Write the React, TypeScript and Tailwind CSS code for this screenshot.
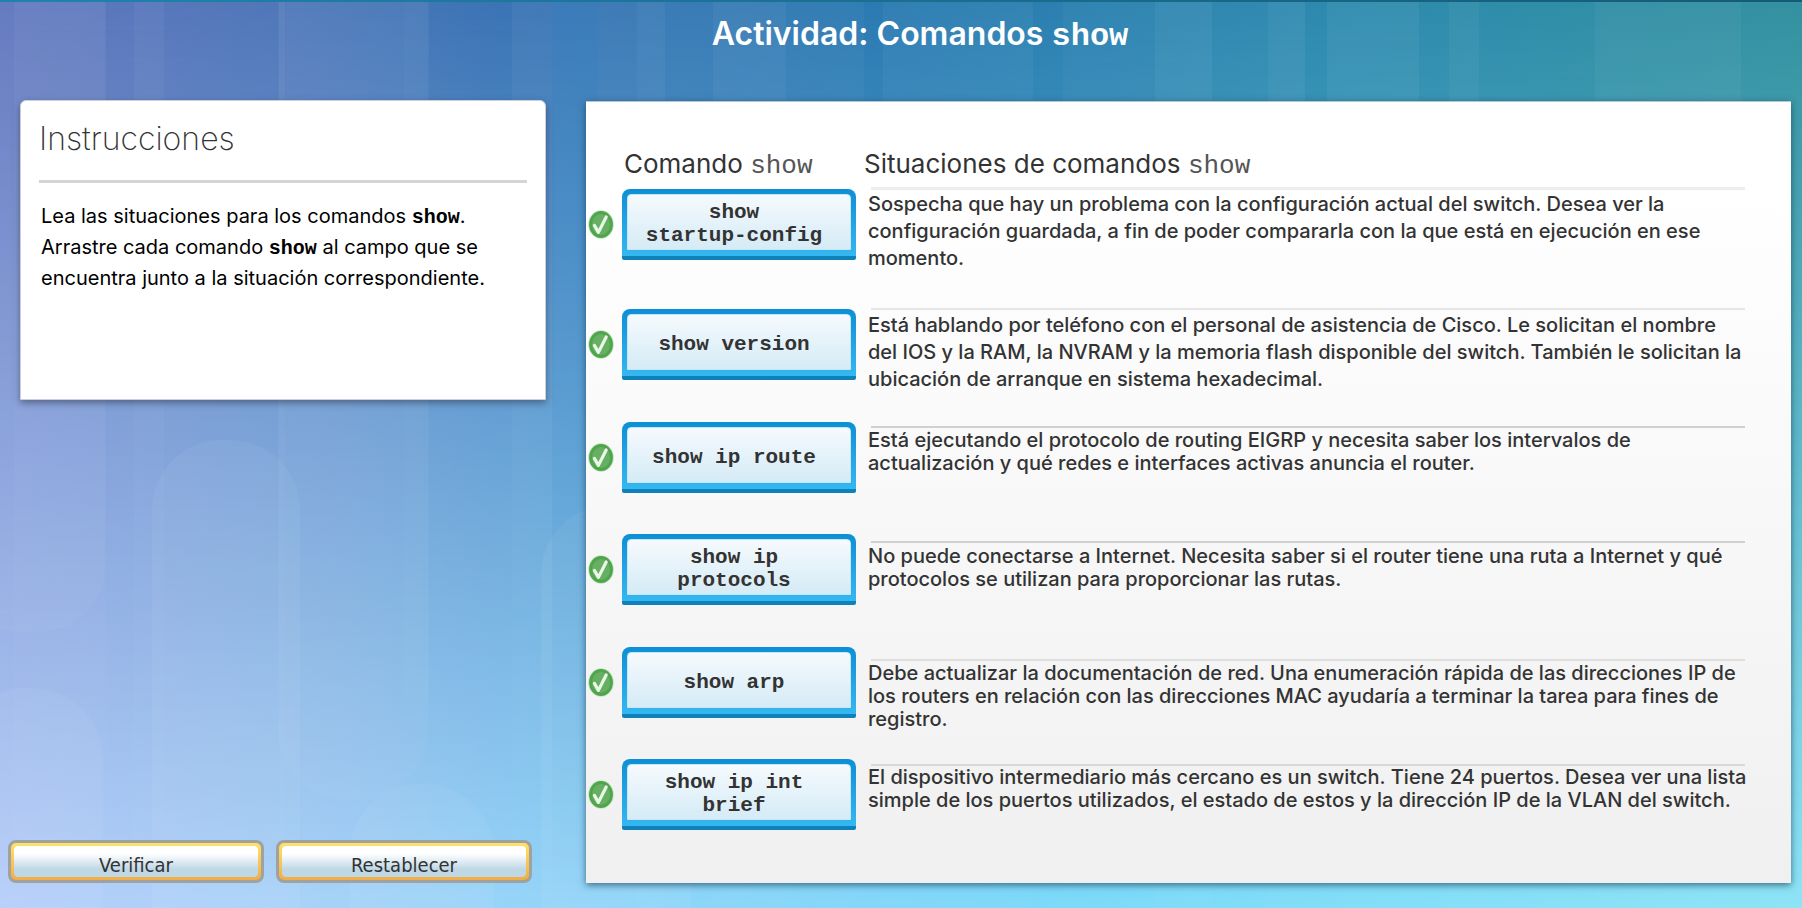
import type { ReactNode } from "react";

type Row = { command: string; situation: string; row: string; offset: string; line: string; rule: string };

const rows: Row[] = [
  {
    command: "show\nstartup-config",
    situation:
      "Sospecha que hay un problema con la configuración actual del switch. Desea ver la\nconfiguración guardada, a fin de poder compararla con la que está en ejecución en ese\nmomento.",
    row: "min-h-[120px]",
    offset: "pt-px",
    line: "pt-px leading-[27px]",
    rule: "border-[#ededed] border-t-[3px]",
  },
  {
    command: "show version",
    situation:
      "Está hablando por teléfono con el personal de asistencia de Cisco. Le solicitan el nombre\ndel IOS y la RAM, la NVRAM y la memoria flash disponible del switch. También le solicitan la\nubicación de arranque en sistema hexadecimal.",
    row: "min-h-[113px]",
    offset: "pt-0.5",
    line: "pt-0.5 leading-[27px]",
    rule: "border-[#e6e6e6] border-t-2",
  },
  {
    command: "show ip route",
    situation:
      "Está ejecutando el protocolo de routing EIGRP y necesita saber los intervalos de\nactualización y qué redes e interfaces activas anuncia el router.",
    row: "min-h-[112px]",
    offset: "pt-[7px]",
    line: "pt-px leading-[23px]",
    rule: "border-[#d0d0d0] border-t-2",
  },
  {
    command: "show ip\nprotocols",
    situation:
      "No puede conectarse a Internet. Necesita saber si el router tiene una ruta a Internet y qué\nprotocolos se utilizan para proporcionar las rutas.",
    row: "min-h-[113px]",
    offset: "pt-2.5",
    line: "pt-0.5 leading-[23px]",
    rule: "border-[#d0d0d0] border-t-2",
  },
  {
    command: "show arp",
    situation:
      "Debe actualizar la documentación de red. Una enumeración rápida de las direcciones IP de\nlos routers en relación con las direcciones MAC ayudaría a terminar la tarea para fines de\nregistro.",
    row: "min-h-[112px]",
    offset: "pt-[15px]",
    line: "pt-px leading-[23px]",
    rule: "border-[#dedede] border-t-2",
  },
  {
    command: "show ip int\nbrief",
    situation:
      "El dispositivo intermediario más cercano es un switch. Tiene 24 puertos. Desea ver una lista\nsimple de los puertos utilizados, el estado de estos y la dirección IP de la VLAN del switch.",
    row: "min-h-[112px]",
    offset: "pt-2",
    line: "leading-[23px]",
    rule: "border-[#d8d8d8] border-t-2",
  },
];

const bands = [
  [14, 92, 0.04], [134, 30, 0.04], [279, 6, 0.05], [286, 143, 0.02], [512, 125, 0.04],
  [637, 28, 0.07], [665, 48, 0.03], [713, 73, 0.07], [786, 78, 0.03], [883, 150, 0.04],
  [1063, 92, 0.03], [1155, 57, 0.07], [1212, 56, 0.02], [1268, 37, 0.06], [1327, 92, 0.05],
  [1449, 30, 0.04], [1595, 146, 0.04],
];

function Backdrop() {
  return (
    <svg className="absolute inset-0 h-full w-full" viewBox="0 0 1802 908" preserveAspectRatio="none" aria-hidden="true">
      <defs>
        <linearGradient id="sky">
          <stop offset="0" stopColor="#6277be" />
          <stop offset="0.15" stopColor="#5077b9" />
          <stop offset="0.27" stopColor="#3c74b5" />
          <stop offset="0.5" stopColor="#2a7ab1" />
          <stop offset="0.75" stopColor="#2d8aae" />
          <stop offset="1" stopColor="#33919f" />
        </linearGradient>
        <linearGradient id="sea">
          <stop offset="0" stopColor="#b6cffa" />
          <stop offset="0.18" stopColor="#a8d3f8" />
          <stop offset="0.33" stopColor="#90d5f9" />
          <stop offset="0.6" stopColor="#7cdaf9" />
          <stop offset="1" stopColor="#8ee4f6" />
        </linearGradient>
        <linearGradient id="fade" x1="0" y1="0" x2="0" y2="1">
          <stop offset="0" stopColor="#000" />
          <stop offset="1" stopColor="#fff" />
        </linearGradient>
        <mask id="down">
          <rect width="1802" height="908" fill="url(#fade)" />
        </mask>
        <linearGradient id="deep" x1="0" y1="0" x2="0" y2="1">
          <stop offset="0.3" stopColor="#1f7fc4" stopOpacity="0.15" />
          <stop offset="1" stopColor="#1f7fc4" stopOpacity="0" />
        </linearGradient>
        <linearGradient id="band" x1="0" y1="0" x2="0" y2="1">
          <stop offset="0" stopColor="#fff" />
          <stop offset="1" stopColor="#fff" stopOpacity="0.2" />
        </linearGradient>
        <linearGradient id="edge">
          <stop offset="0" stopColor="#1f83ac" />
          <stop offset="1" stopColor="#155a76" />
        </linearGradient>
      </defs>
      <rect width="1802" height="908" fill="url(#sky)" />
      <rect width="1802" height="908" fill="url(#sea)" mask="url(#down)" />
      {bands.map(([x, w, o]) => (
        <rect key={x} x={x} width={w} height="908" fill="url(#band)" opacity={o} />
      ))}
      <g fill="#fff">
        <rect x="-46" y="-60" width="151" height="692" rx="66" opacity="0.03" />
        <rect x="-46" y="688" width="148" height="400" rx="70" opacity="0.05" />
        <rect x="152" y="440" width="148" height="700" rx="70" opacity="0.05" />
        <rect x="278" y="-100" width="150" height="900" rx="70" opacity="0.03" />
        <rect x="404" y="-100" width="25" height="800" opacity="0.02" />
        <rect x="350" y="784" width="144" height="300" rx="70" opacity="0.05" />
        <rect x="541" y="505" width="150" height="600" rx="70" opacity="0.06" />
      </g>
      <rect x="552" width="46" height="908" fill="url(#deep)" />
      <rect width="1802" height="2" fill="url(#edge)" />
    </svg>
  );
}

function Check() {
  return (
    <svg className="h-[29px] w-[26px] shrink-0" viewBox="0 0 26 29" preserveAspectRatio="none" role="img" aria-label="Correcto">
      <ellipse cx="13" cy="14.5" rx="12.8" ry="14.3" fill="#c3e2c0" />
      <ellipse cx="13" cy="14.5" rx="11.9" ry="13.4" fill="#4ea54c" />
      <ellipse cx="13" cy="14.5" rx="9" ry="10.5" fill="#67b063" />
      <path d="M6.4 15.4 L10.4 22.4 L18.2 7" fill="none" stroke="#e9f6e8" strokeWidth="3.2" strokeLinecap="round" strokeLinejoin="round" />
    </svg>
  );
}

function Tile({ children }: { children: ReactNode }) {
  return (
    <button
      type="button"
      className="flex h-[71px] w-[234px] shrink-0 rounded-t-lg rounded-b-xs border-b-4 border-[#0e82b8] bg-linear-to-b from-[#0b8fd6] to-[#35b7f1] px-[5px] pt-[5px] pb-[6px]"
    >
      <span className="flex h-full w-full items-center justify-center rounded-t-sm border border-[#c4e8f8] bg-linear-to-b from-[#f5fafd] to-[#d5ebf6] pt-1 pr-2.5 font-['Liberation_Mono',monospace] text-[21px] leading-[23px] font-bold whitespace-pre-line text-[#333]">
        {children}
      </span>
    </button>
  );
}

function Action({ children }: { children: ReactNode }) {
  return (
    <button
      type="button"
      className="h-[43px] w-[256px] rounded-lg border-[3px] border-[#9fa2a0] bg-linear-to-b from-[#fde36a] to-[#f3ac45] p-[3px]"
    >
      <span className="flex h-full items-center justify-center rounded-sm bg-linear-to-b from-white from-25% to-[#bfd8e6] to-75% pt-1.5 font-['DejaVu_Sans_Condensed','Noto_Sans',sans-serif] text-xl leading-6 text-[#333]">
        {children}
      </span>
    </button>
  );
}

const Code = ({ children }: { children: ReactNode }) => (
  <code className="font-['Liberation_Mono',monospace] leading-none">{children}</code>
);

export default function App() {
  return (
    <div className="relative min-h-screen font-['Inter',sans-serif] text-[#333]">
      <Backdrop />
      <div className="relative flex min-h-screen flex-col">
        <header className="h-[100px] pt-3.5 pl-[38px] text-center">
          <h1 className="text-[32px] leading-10 font-semibold text-white">
            Actividad: Comandos <Code>show</Code>
          </h1>
        </header>
        <main className="flex flex-1 justify-between pr-[11px]">
          <aside className="flex w-[546px] shrink-0 flex-col justify-between pb-[25px]">
            <section className="ml-5 min-h-[300px] rounded-t-md border border-[#c9d0dc] bg-white px-[18px] pt-4 shadow-[0_3px_7px_rgba(50,60,80,0.6)]">
              <h2 className="border-b-[3px] border-[#d4d4d4] pb-[19px] text-[32px] leading-[44px] font-extralight">Instrucciones</h2>
              <p className="pt-[18px] pl-0.5 text-xl leading-[31px] font-normal whitespace-pre-line text-black">
                {"Lea las situaciones para los comandos "}
                <b className="leading-none"><Code>show</Code></b>
                {".\nArrastre cada comando "}
                <b className="leading-none"><Code>show</Code></b>
                {" al campo que se\nencuentra junto a la situación correspondiente."}
              </p>
            </section>
            <div className="flex gap-3 pl-2">
              <Action>Verificar</Action>
              <Action>Restablecer</Action>
            </div>
          </aside>
          <section className="ml-10 mt-px mb-[25px] flex-1 border-t border-[#b8c6d0] bg-linear-to-b from-white from-10% to-[#f0f0f0] pt-[41px] shadow-[0_2px_7px_rgba(20,60,90,0.7)]">
            <div className="flex pl-[38px] text-[26px] leading-[42px] [&_code]:text-[#555]">
              <h2 className="w-[240px]">Comando <Code>show</Code></h2>
              <h2>Situaciones de comandos <Code>show</Code></h2>
            </div>
            <ul className="pt-px">
              {rows.map((r) => (
                <li key={r.command} className={`flex items-start ${r.row}`}>
                  <div className="flex items-center gap-2 pt-[3px] pl-0.5">
                    <Check />
                    <Tile>{r.command}</Tile>
                  </div>
                  <div className={`min-w-0 flex-1 pr-[30px] pl-3 ${r.offset}`}>
                    <hr className={`mr-4 ml-[3px] ${r.rule}`} />
                    <p className={`text-xl font-medium whitespace-pre-line ${r.line}`}>{r.situation}</p>
                  </div>
                </li>
              ))}
            </ul>
          </section>
        </main>
      </div>
    </div>
  );
}
